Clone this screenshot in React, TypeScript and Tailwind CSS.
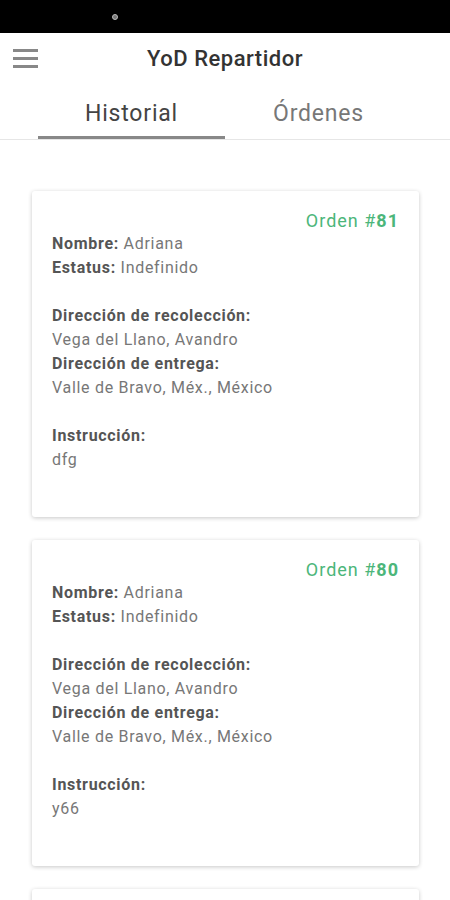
import React from "react";

const orders = [
  { id: 81, instr: "dfg" },
  { id: 80, instr: "y66" },
  { id: 79, instr: "abc" },
];

function Card({ id, instr }: { id: number; instr: string }) {
  return (
    <div className="bg-white rounded-[3px] shadow-[0_1px_4px_rgba(0,0,0,0.22)] pt-[19px] pb-[45px] px-5 text-[16px] leading-[24px] tracking-[0.7px]">
      <div className="text-right text-[18px] leading-[22px] tracking-[1px] text-[#4cb67a]">
        Orden #<span className="font-bold">{id}</span>
      </div>
      <div className="text-[#777]">
        <span className="font-bold text-[#555]">Nombre:</span> Adriana
      </div>
      <div className="text-[#777]">
        <span className="font-bold text-[#555]">Estatus:</span> Indefinido
      </div>
      <div className="h-[24px]" />
      <div className="font-bold text-[#555]">Dirección de recolección:</div>
      <div className="text-[#777]">Vega del Llano, Avandro</div>
      <div className="font-bold text-[#555]">Dirección de entrega:</div>
      <div className="text-[#777]">Valle de Bravo, Méx., México</div>
      <div className="h-[24px]" />
      <div className="font-bold text-[#555]">Instrucción:</div>
      <div className="text-[#777]">{instr}</div>
    </div>
  );
}

export default function App() {
  return (
    <div
      className="w-[450px] h-[900px] overflow-hidden bg-white flex flex-col"
      style={{ fontFamily: "Roboto, 'Noto Sans', sans-serif" }}
    >
      <div className="h-[33px] bg-black flex items-center shrink-0">
        <div className="ml-[112px] w-[6px] h-[6px] rounded-full bg-[#777] border border-[#bbb]" />
      </div>
      <div className="relative h-[50px] flex items-center justify-center shrink-0">
        <div className="absolute left-[13px] top-[16px] flex flex-col gap-[5px]">
          <div className="w-[25px] h-[3px] bg-[#888]" />
          <div className="w-[25px] h-[3px] bg-[#888]" />
          <div className="w-[25px] h-[3px] bg-[#888]" />
        </div>
        <div className="text-[22px] font-medium text-[#333] tracking-[0.5px]">YoD Repartidor</div>
      </div>
      <div className="shrink-0 border-b border-[#e6e6e6]">
        <div className="mx-[38px] flex">
          <div className="flex-1 h-[56px] pt-[9px] flex items-center justify-center text-[23px] tracking-[0.8px] text-[#444] border-b-[3px] border-[#888] mb-[-1px]">
            Historial
          </div>
          <div className="flex-1 h-[56px] pt-[9px] pb-[3px] flex items-center justify-center text-[23px] tracking-[0.8px] text-[#777]">
            Órdenes
          </div>
        </div>
      </div>
      <div className="flex flex-col gap-[23px] pt-[51px] pl-[32px] pr-[31px]">
        {orders.map((o) => (
          <Card key={o.id} id={o.id} instr={o.instr} />
        ))}
      </div>
    </div>
  );
}
